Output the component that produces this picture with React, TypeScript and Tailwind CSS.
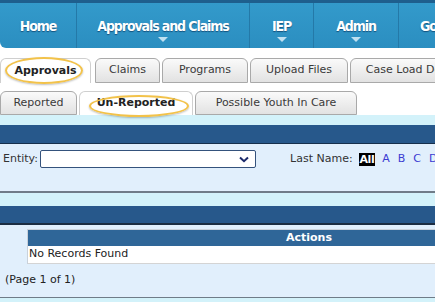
import * as React from "react";

const navItems = [
  { label: "Home", w: "w-[77px]", caret: false },
  { label: "Approvals and Claims", w: "w-[173px]", caret: true },
  { label: "IEP", w: "w-[64px]", caret: true },
  { label: "Admin", w: "w-[85px]", caret: true },
  { label: "Go", w: "w-[60px]", caret: false },
];

function NavItem({ label, w, caret }: { label: string; w: string; caret: boolean }) {
  return (
    <div className={`relative flex h-full shrink-0 items-center justify-center border-r border-[#2479a8] ${w}`}>
      <span className="whitespace-nowrap text-[14px] font-bold leading-none tracking-[-1.1px] text-white font-stretch-condensed [text-shadow:0_1px_1px_rgba(0,40,80,0.6)]">
        {label}
      </span>
      {caret && (
        <span className="absolute bottom-[6px] left-1/2 -translate-x-1/2 border-x-[5px] border-t-[5px] border-x-transparent border-t-[#bfe0f1]" />
      )}
    </div>
  );
}

function Tab({ label, active, className }: { label: string; active?: boolean; className: string }) {
  return (
    <div
      className={`flex h-full shrink-0 items-center justify-center rounded-t-[6px] border whitespace-nowrap ${
        active
          ? "border-b-0 border-[#cfcfcf] bg-white font-bold text-[#222]"
          : "border-[#a9a9a9] bg-gradient-to-b from-[#fafafa] to-[#e2e2e2] text-[#3a3a3a]"
      } ${className}`}
    >
      {label}
    </div>
  );
}

export default function App() {
  const letters = ["A", "B", "C", "D"];

  return (
    <div className="relative h-[302px] w-[435px] overflow-hidden bg-white font-['DejaVu_Sans','Verdana',sans-serif] text-[11px] text-[#222]">
      {/* ── Top navigation ── */}
      <div className="h-[3px] w-[700px] bg-[#1e5f8e]" />
      <div className="flex h-[45px] w-[700px] rounded-bl-[6px] bg-gradient-to-b from-[#339acb] to-[#2b8ec0] font-['DejaVu_Sans_Condensed','DejaVu_Sans',sans-serif]">
        {navItems.map((n) => (
          <NavItem key={n.label} {...n} />
        ))}
      </div>

      {/* ── Tabs row 1 ── */}
      <div className="mt-[10px] flex h-[25px] w-[700px] items-end gap-[2px]">
        <Tab label="Approvals" active className="mr-[2px] w-[91px]" />
        <Tab label="Claims" className="w-[65px]" />
        <Tab label="Programs" className="w-[86px]" />
        <Tab label="Upload Files" className="w-[98px]" />
        <Tab label="Case Load Details" className="w-[130px]" />
      </div>

      {/* ── Tabs row 2 ── */}
      <div className="mt-[8px] flex h-[24px] w-[700px] items-end gap-[2px]">
        <Tab label="Reported" className="w-[77px]" />
        <Tab label="Un-Reported" active className="w-[114px]" />
        <Tab label="Possible Youth In Care" className="w-[162px]" />
      </div>

      {/* ── Filter panel ── */}
      <div className="bg-[#d3f2fa] pt-[10px]">
        <div className="h-[19px] border-b border-[#162f4c] bg-[#27588b]" />
        <div className="h-[49px] border-b-2 border-[#6f7c88] bg-[#e1effc] pt-[6px]">
          <div className="flex h-[18px] items-center whitespace-nowrap">
            <span className="pl-[3px] text-[#333]">Entity:</span>
            <div className="ml-[2px] flex h-[18px] w-[216px] shrink-0 items-center justify-end rounded-[2px] border border-[#34527c] bg-white pr-[6px]">
              <svg width="10" height="7" viewBox="0 0 10 7">
                <path d="M1 1.5 L5 5.2 L9 1.5" fill="none" stroke="#1b2a6b" strokeWidth="2" />
              </svg>
            </div>
            <span className="ml-[34px] text-[#333]">Last Name:</span>
            <span className="ml-[6px] bg-black px-[1px] font-bold leading-[13px] tracking-[-0.5px] text-white">All</span>
            <div className="ml-[7px] flex gap-[8px] text-[#3b3bd2]">
              {letters.map((l) => (
                <span key={l}>{l}</span>
              ))}
            </div>
          </div>
        </div>
      </div>

      {/* ── Results panel ── */}
      <div className="bg-[#d3f2fa] pt-[13px]">
        <div className="h-[19px] border-b-2 border-[#1b2d42] bg-[#27588b]" />
        <div className="h-[73px] border-b border-[#6f7c88] bg-[#e1effc] pt-[4px]">
          <div className="ml-[27px] w-[600px] border-l border-t border-[#c9d1da]">
            <div className="flex h-[16px] items-center bg-[#2f6698] font-bold text-white">
              <div className="w-[231px]" />
              <div className="w-[100px] text-center">Actions</div>
            </div>
            <div className="flex h-[18px] items-center border-b border-[#d4d4d4] bg-white pl-[1px]">
              No Records Found
            </div>
          </div>
          <div className="mt-[8px] pl-[5px]">(Page 1 of 1)</div>
        </div>
        <div className="h-[4px]" />
      </div>

      {/* ── Highlight rings ── */}
      <div className="absolute left-[5px] top-[57px] h-[27px] w-[78px] rounded-[50%] border-2 border-[#f2c24a] shadow-[0_1px_2px_rgba(0,0,0,0.25)]" />
      <div className="absolute left-[89px] top-[95px] h-[22px] w-[100px] rounded-[50%] border-2 border-[#f2c24a] shadow-[0_1px_2px_rgba(0,0,0,0.25)]" />
    </div>
  );
}
